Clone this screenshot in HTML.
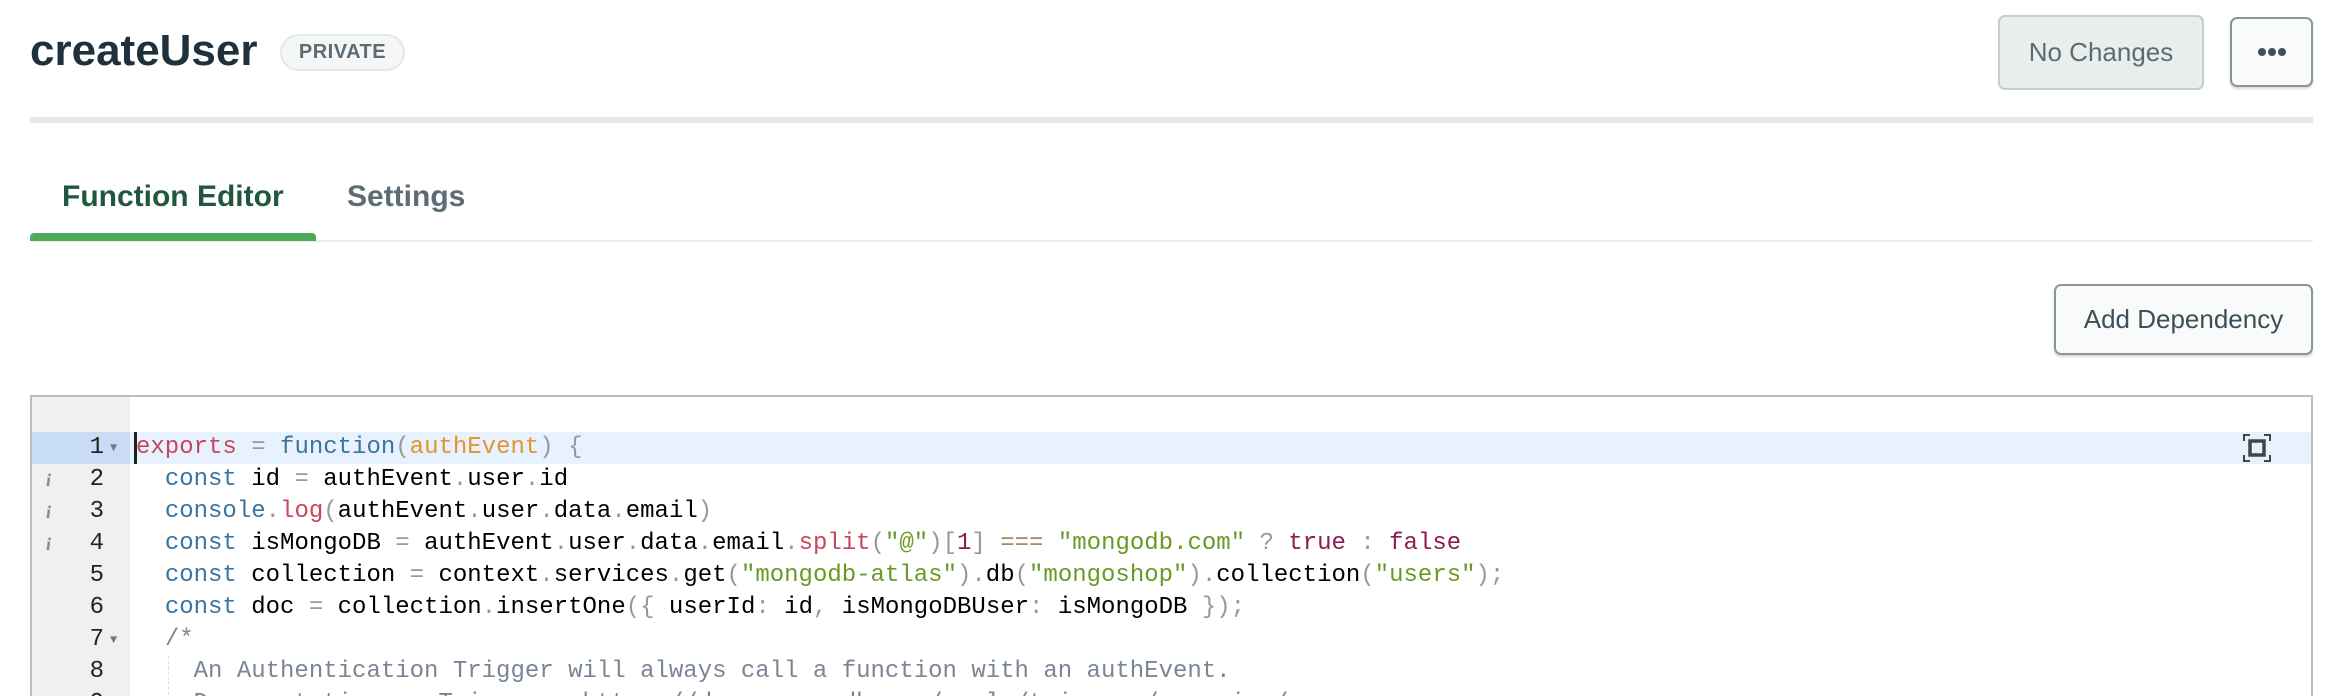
<!DOCTYPE html>
<html><head><meta charset="utf-8"><style>
*{box-sizing:border-box;margin:0;padding:0}
body{width:2334px;height:696px;overflow:hidden;background:#fff;font-family:"Liberation Sans",Arial,sans-serif;position:relative}
.abs{position:absolute}
.title{left:30px;top:26px;font-size:44px;font-weight:bold;color:#21313c;letter-spacing:0}
.badge{left:280px;top:34px;width:125px;height:37px;border:2px solid #e3e9e7;border-radius:19px;background:#f5f7f6;color:#5d6c74;font-weight:bold;font-size:20px;line-height:33px;text-align:center;letter-spacing:.5px}
.btn{border-radius:7px;font-size:26px;text-align:center}
.nochg{left:1998px;top:15px;width:206px;height:75px;background:#e7eeec;border:2px solid #c3cfcc;color:#5d6c74;line-height:71px}
.more{left:2230px;top:17px;width:83px;height:70px;background:#f9fbfa;border:2px solid #89979b;box-shadow:0 2px 2px rgba(0,0,0,.15)}
.hr{left:30px;top:117px;width:2283px;height:6px;background:#e8e8e9}
.tab{top:180px;font-size:30px;font-weight:bold}
.ul{left:30px;top:233px;width:286px;height:8px;background:#4faa5c;border-radius:4px 4px 0 0}
.hr2{left:30px;top:240px;width:2283px;height:2px;background:#e7eeec}
.add{left:2054px;top:284px;width:259px;height:71px;background:#f9fbfa;border:2px solid #89979b;color:#3d4f58;line-height:67px;box-shadow:0 2px 2px rgba(0,0,0,.15)}
.ed{left:30px;top:395px;width:2283px;height:301px;border:2px solid #bdbdbd;border-bottom:none;overflow:hidden}
.gut{position:absolute;left:0;top:0;width:98px;height:100%;background:#f0f0f0}
.act{position:absolute;left:98px;top:35px;right:0;height:32px;background:#e8f2fe}
.gact{position:absolute;left:0;top:35px;width:98px;height:32px;background:#c8dcf6}
.code{position:absolute;left:0;top:35px;width:2280px;font-family:"Liberation Mono",monospace;font-size:24px;line-height:32px;color:#000}
.row{position:relative;height:32px}
.ln{position:absolute;left:0;width:72px;text-align:right;color:#222}
.fold{position:absolute;left:78px;color:#777;font-size:12px}
.info{position:absolute;left:14px;color:#888;font-style:italic;font-family:"Liberation Serif",serif;font-weight:bold;font-size:18px}
.tx{position:absolute;left:104px;white-space:pre}
.k{color:#3a74a0}.r{color:#c8475d}.o{color:#e2952d}.p{color:#999}.s{color:#6b9a24}.b{color:#8b1d52}.e{color:#a58a62}.c{color:#7a8696}
</style></head><body>
<div class="abs title">createUser</div>
<div class="abs badge">PRIVATE</div>
<div class="abs btn nochg">No Changes</div>
<div class="abs btn more"><svg width="79" height="66"><circle cx="30" cy="33" r="4" fill="#3d4f58"/><circle cx="40" cy="33" r="4" fill="#3d4f58"/><circle cx="50" cy="33" r="4" fill="#3d4f58"/></svg></div>
<div class="abs hr"></div>
<div class="abs tab" style="left:62px;color:#21573f">Function Editor</div>
<div class="abs tab" style="left:347px;color:#5d6c74">Settings</div>
<div class="abs hr2"></div>
<div class="abs ul"></div>
<div class="abs btn add">Add Dependency</div>
<div class="abs ed">
<div class="gut"></div><div class="gact"></div><div class="act"></div>
<svg style="position:absolute;left:2211px;top:37px" width="28" height="28" viewBox="0 0 28 28" fill="none" stroke="#444" stroke-width="2"><path d="M1 7V1h6M21 1h6v6M27 21v6h-6M7 27H1v-6"/><rect x="7" y="7" width="14" height="14" stroke-width="3.5"/></svg>
<div style="position:absolute;left:102px;top:35px;width:3px;height:32px;background:#222"></div>
<div style="position:absolute;left:136px;top:259px;height:70px;border-left:1px dashed #ddd"></div>
<div class="code">
<div class="row"><span class="ln">1</span><span class="fold">▼</span><span class="tx"><span class="r">exports</span> <span class="p">=</span> <span class="k">function</span><span class="p">(</span><span class="o">authEvent</span><span class="p">)</span> <span class="p">{</span></span></div>
<div class="row"><span class="info">i</span><span class="ln">2</span><span class="tx">  <span class="k">const</span> id <span class="p">=</span> authEvent<span class="p">.</span>user<span class="p">.</span>id</span></div>
<div class="row"><span class="info">i</span><span class="ln">3</span><span class="tx">  <span class="k">console</span><span class="p">.</span><span class="r">log</span><span class="p">(</span>authEvent<span class="p">.</span>user<span class="p">.</span>data<span class="p">.</span>email<span class="p">)</span></span></div>
<div class="row"><span class="info">i</span><span class="ln">4</span><span class="tx">  <span class="k">const</span> isMongoDB <span class="p">=</span> authEvent<span class="p">.</span>user<span class="p">.</span>data<span class="p">.</span>email<span class="p">.</span><span class="r">split</span><span class="p">(</span><span class="s">"@"</span><span class="p">)[</span><span class="b">1</span><span class="p">]</span> <span class="e">===</span> <span class="s">"mongodb.com"</span> <span class="p">?</span> <span class="b">true</span> <span class="p">:</span> <span class="b">false</span></span></div>
<div class="row"><span class="ln">5</span><span class="tx">  <span class="k">const</span> collection <span class="p">=</span> context<span class="p">.</span>services<span class="p">.</span>get<span class="p">(</span><span class="s">"mongodb-atlas"</span><span class="p">).</span>db<span class="p">(</span><span class="s">"mongoshop"</span><span class="p">).</span>collection<span class="p">(</span><span class="s">"users"</span><span class="p">);</span></span></div>
<div class="row"><span class="ln">6</span><span class="tx">  <span class="k">const</span> doc <span class="p">=</span> collection<span class="p">.</span>insertOne<span class="p">({</span> userId<span class="p">:</span> id<span class="p">,</span> isMongoDBUser<span class="p">:</span> isMongoDB <span class="p">});</span></span></div>
<div class="row"><span class="ln">7</span><span class="fold">▼</span><span class="tx">  <span class="c">/*</span></span></div>
<div class="row"><span class="ln">8</span><span class="tx c">    An Authentication Trigger will always call a function with an authEvent.</span></div>
<div class="row"><span class="ln">9</span><span class="tx c">    Documentation on Triggers: https://docs.mongodb.com/realm/triggers/overview/</span></div>
</div>
</div>
</body></html>
